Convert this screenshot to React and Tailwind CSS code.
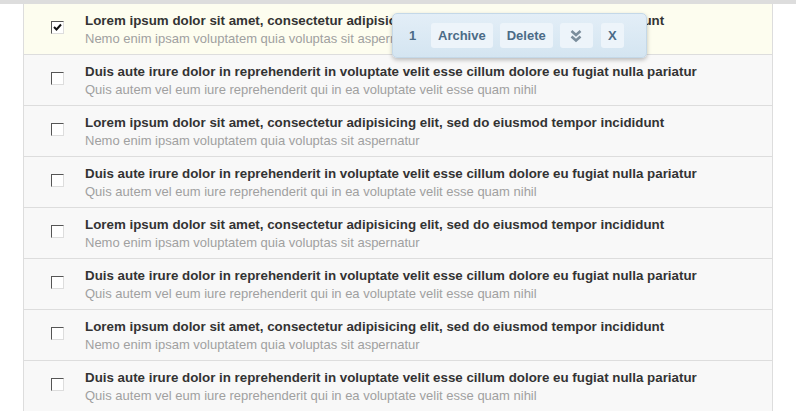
import React from "react";

const rows = Array.from({ length: 8 }, (_, i) =>
  i % 2 === 0
    ? {
        t: "Lorem ipsum dolor sit amet, consectetur adipisicing elit, sed do eiusmod tempor incididunt",
        s: "Nemo enim ipsam voluptatem quia voluptas sit aspernatur",
      }
    : {
        t: "Duis aute irure dolor in reprehenderit in voluptate velit esse cillum dolore eu fugiat nulla pariatur",
        s: "Quis autem vel eum iure reprehenderit qui in ea voluptate velit esse quam nihil",
      }
);

function Check({ checked }) {
  return (
    <div className="w-[13px] h-[13px] bg-white border border-t-[#555] border-l-[#555] border-r-[#ddd] border-b-[#ddd] flex items-center justify-center">
      {checked && (
        <svg width="9" height="9" viewBox="0 0 9 9">
          <path d="M1 4 L3.5 6.5 L8 1.5" stroke="#111" strokeWidth="2" fill="none" />
        </svg>
      )}
    </div>
  );
}

export default function App() {
  return (
    <div className="relative w-[796px] h-[411px] overflow-hidden bg-white" style={{ fontFamily: '"Liberation Sans", Arial, sans-serif' }}>
      <div className="h-[4px] bg-[#dddddd]" />
      <div className="ml-[23px] w-[750px] border-l border-r border-[#dddddd]">
        {rows.map((r, i) => (
          <div
            key={i}
            className={`h-[51px] flex border-b border-[#dddddd] ${i === 0 ? "bg-[#fdfdef]" : "bg-[#f8f8f8]"}`}
          >
            <div className="w-[61px] shrink-0 pl-[27px] pt-[17px]">
              <Check checked={i === 0} />
            </div>
            <div className="pt-[8px] whitespace-nowrap">
              <div className="text-[13.33px] leading-[18px] font-bold text-[#333333]">{r.t}</div>
              <div className="text-[13px] leading-[18px] text-[#a0a0a0]">{r.s}</div>
            </div>
          </div>
        ))}
      </div>

      <div className="absolute left-[392px] top-[13px] w-[255px] h-[45px] rounded-[5px] bg-gradient-to-b from-[#e3eef7] to-[#d4e5f1] border border-[#c4d8e8] shadow-[0_2px_4px_rgba(0,0,0,0.25)] flex items-center pl-[16px] gap-[7px] text-[13px] font-bold text-[#4b6b87]">
        <span className="w-[15px]">1</span>
        <div className="h-[25px] px-[7px] rounded-[3px] bg-[#edf4fa] flex items-center">Archive</div>
        <div className="h-[25px] px-[7px] rounded-[3px] bg-[#edf4fa] flex items-center">Delete</div>
        <div className="h-[25px] w-[33px] rounded-[3px] bg-[#edf4fa] flex items-center justify-center">
          <svg width="12" height="14" viewBox="0 0 12 14">
            <path d="M1.5 2 L6 6 L10.5 2 M1.5 7.5 L6 11.5 L10.5 7.5" stroke="#7a8d9c" strokeWidth="2.6" fill="none" />
          </svg>
        </div>
        <div className="h-[25px] w-[23px] ml-[1px] rounded-[3px] bg-[#edf4fa] flex items-center justify-center">X</div>
      </div>
    </div>
  );
}
